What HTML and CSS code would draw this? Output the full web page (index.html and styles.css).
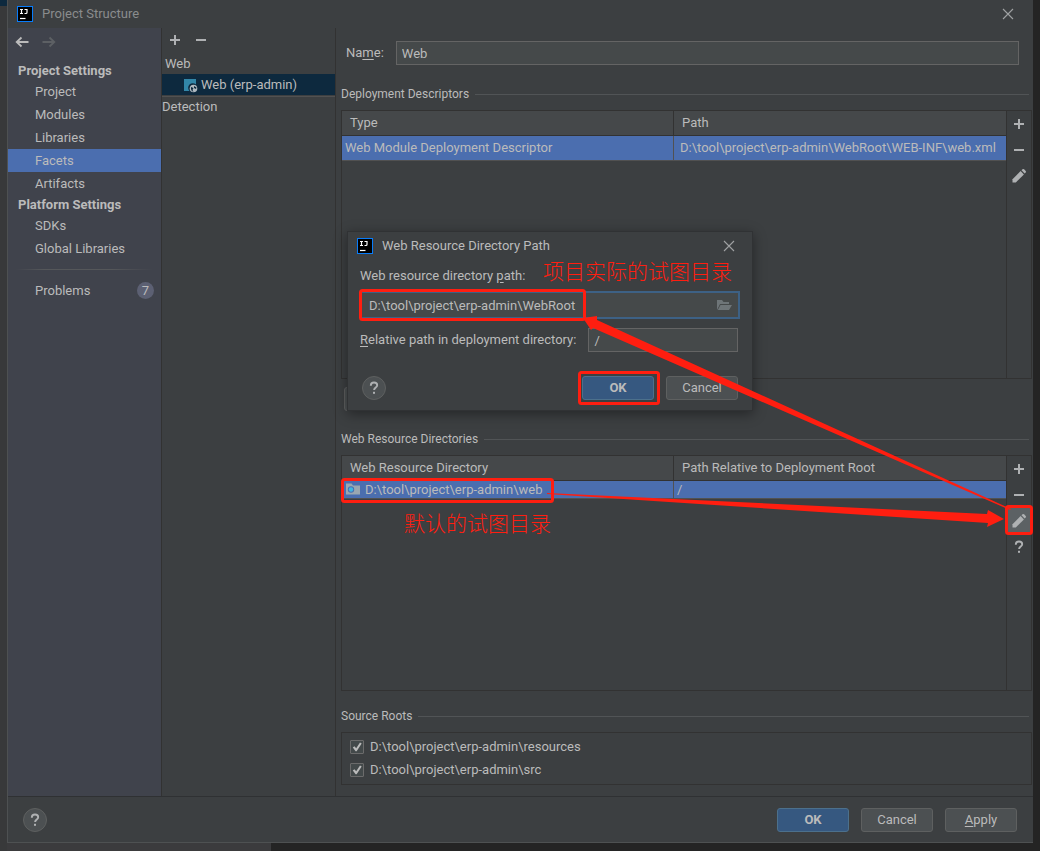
FILE: index.html
```html
<!DOCTYPE html>
<html lang="en">
<head>
    <meta charset="utf-8">
    <title>Project Structure</title>
    <link rel="stylesheet" href="styles.css">
</head>
<body>
    <svg class="sprite" aria-hidden="true">
        <symbol id="logo" viewBox="0 0 16 16">
            <rect width="16" height="16" fill="#087cfa"/>
            <rect x="1" y="1" width="14" height="14" fill="#000"/>
            <path d="M3 3.500h3M4.500 3.500v4M3 7.500h3M7.500 3.500h2.500v3q0 1-1 1H7.500" fill="none" stroke="#fff" stroke-width="1.200"/>
            <path d="M3 12.500h5.500" stroke="#fff" stroke-width="1.200"/>
        </symbol>
        <symbol id="plus" viewBox="0 0 16 16">
            <path d="M3 8h10M8 3v10" stroke="#afb1b3" stroke-width="2"/>
        </symbol>
        <symbol id="minus" viewBox="0 0 16 16">
            <path d="M3 8h10" stroke="#afb1b3" stroke-width="2"/>
        </symbol>
        <symbol id="pencil" viewBox="0 0 16 16">
            <path d="M1.500 14.500v-3.300L9.600 3.100l3.300 3.300-8.100 8.100z" fill="#afb1b3"/>
            <path d="M10.500 2.300l1-1q.8-.7 1.600 0l1.600 1.600q.7.800 0 1.600l-1 1z" fill="#afb1b3"/>
        </symbol>
        <symbol id="question" viewBox="0 0 16 16">
            <path d="M4.800 5.700q0-3.200 3.200-3.200t3.200 2.800c0 2.200-3.100 2.200-3.100 4.700" fill="none" stroke="#afb1b3" stroke-width="1.900"/>
            <rect x="7" y="11.800" width="2" height="2" fill="#afb1b3"/>
        </symbol>
        <symbol id="close" viewBox="0 0 16 16">
            <path d="M3 3l10 10M13 3L3 13" stroke="#a0a2a3" stroke-width="1.100"/>
        </symbol>
        <symbol id="arrow" viewBox="0 0 16 16">
            <path d="M14.500 8H3M7.500 3.500L2.700 8l4.800 4.500" fill="none" stroke="currentColor" stroke-width="1.800"/>
        </symbol>
    </svg>

    <div class="window">
        <header class="title-bar">
            <svg class="icon"><use href="#logo"/></svg>
            <span>Project Structure</span>
            <button class="icon-button" aria-label="Close"><svg class="icon"><use href="#close"/></svg></button>
        </header>

        <div class="content">
            <nav class="sidebar">
                <div class="history">
                    <button class="icon-button" aria-label="Back"><svg class="icon"><use href="#arrow"/></svg></button>
                    <button class="icon-button forward" aria-label="Forward" disabled><svg class="icon"><use href="#arrow"/></svg></button>
                </div>
                <h2>Project Settings</h2>
                <a href="#">Project</a>
                <a href="#">Modules</a>
                <a href="#">Libraries</a>
                <a href="#" class="active">Facets</a>
                <a href="#">Artifacts</a>
                <h2>Platform Settings</h2>
                <a href="#">SDKs</a>
                <a href="#">Global Libraries</a>
                <hr>
                <a href="#">Problems <span class="count">7</span></a>
            </nav>

            <section class="facets">
                <div class="facet-tools">
                    <button class="icon-button" aria-label="Add"><svg class="icon"><use href="#plus"/></svg></button>
                    <button class="icon-button" aria-label="Remove"><svg class="icon"><use href="#minus"/></svg></button>
                </div>
                <div class="facet-group">Web</div>
                <div class="facet-item">
                    <svg class="icon" viewBox="0 0 16 16">
                        <path d="M2 2h12v5.500a4.500 4.500 0 0 0-6.500 6.500H2z" fill="#3286a8"/>
                        <circle cx="11.500" cy="11.500" r="3.800" fill="#afb9c0"/>
                        <path d="M9 10l2.500 1-1 2 1 1.800q-3-.8-2.500-4.800zM12 9l2.500 1.500-.5 1.500-2-1z" fill="#0d293e"/>
                    </svg>
                    Web (erp-admin)
                </div>
                <div class="facet-detection">Detection</div>
            </section>

            <main class="editor">
                <div class="name-row">
                    <label for="name">Na<u>m</u>e:</label>
                    <input type="text" id="name" value="Web">
                </div>

                <h3>Deployment Descriptors</h3>
                <div class="panel descriptors">
                    <table>
                        <thead>
                            <tr><th>Type</th><th>Path</th></tr>
                        </thead>
                        <tbody>
                            <tr><td>Web Module Deployment Descriptor</td><td>D:\tool\project\erp-admin\WebRoot\WEB-INF\web.xml</td></tr>
                        </tbody>
                    </table>
                    <div class="tools">
                        <button class="icon-button" aria-label="Add"><svg class="icon"><use href="#plus"/></svg></button>
                        <button class="icon-button" aria-label="Remove"><svg class="icon"><use href="#minus"/></svg></button>
                        <button class="icon-button" aria-label="Edit"><svg class="icon"><use href="#pencil"/></svg></button>
                    </div>
                </div>
                <button class="button descriptor-button" aria-label="Add descriptor"></button>

                <h3>Web Resource Directories</h3>
                <div class="panel resources">
                    <table>
                        <thead>
                            <tr><th>Web Resource Directory</th><th>Path Relative to Deployment Root</th></tr>
                        </thead>
                        <tbody>
                            <tr>
                                <td>
                                    <div class="directory">
                                        <svg class="icon" viewBox="0 0 16 16">
                                            <path d="M1 2.500h5.500l1.500 2h7v9H1z" fill="#9aa7b0"/>
                                            <circle cx="6" cy="8.500" r="3.200" fill="#4b6eaf"/>
                                            <circle cx="6" cy="8.500" r="2.200" fill="#40b6e0"/>
                                        </svg>
                                        D:\tool\project\erp-admin\web
                                    </div>
                                </td>
                                <td>/</td>
                            </tr>
                        </tbody>
                    </table>
                    <div class="tools">
                        <button class="icon-button" aria-label="Add"><svg class="icon"><use href="#plus"/></svg></button>
                        <button class="icon-button" aria-label="Remove"><svg class="icon"><use href="#minus"/></svg></button>
                        <button class="icon-button pressed" aria-label="Edit"><svg class="icon"><use href="#pencil"/></svg></button>
                        <button class="icon-button" aria-label="Help"><svg class="icon"><use href="#question"/></svg></button>
                    </div>
                </div>

                <h3>Source Roots</h3>
                <div class="source-roots">
                    <label><input type="checkbox" checked> D:\tool\project\erp-admin\resources</label>
                    <label><input type="checkbox" checked> D:\tool\project\erp-admin\src</label>
                </div>
            </main>
        </div>

        <footer class="footer">
            <button class="help" aria-label="Help"><svg class="icon"><use href="#question"/></svg></button>
            <button class="button primary">OK</button>
            <button class="button">Cancel</button>
            <button class="button"><u>A</u>pply</button>
        </footer>
    </div>

    <div class="dialog" role="dialog" aria-labelledby="dialogTitle">
        <header class="dialog-title">
            <svg class="icon"><use href="#logo"/></svg>
            <span id="dialogTitle">Web Resource Directory Path</span>
            <button class="icon-button" aria-label="Close"><svg class="icon"><use href="#close"/></svg></button>
        </header>
        <div class="dialog-body">
            <label for="resourcePath">Web resource directory <u>p</u>ath:</label>
            <div class="path-field">
                <input type="text" id="resourcePath" value="D:\tool\project\erp-admin\WebRoot">
                <button class="icon-button" aria-label="Browse">
                    <svg class="icon" viewBox="0 0 16 16">
                        <path d="M1 13V3h5l1.500 2H13v2H4z" fill="#6e7578"/>
                        <path d="M4.500 8H16l-3 5H1.800z" fill="#6e7578"/>
                    </svg>
                </button>
            </div>
            <div class="relative-row">
                <label for="relativePath"><u>R</u>elative path in deployment directory:</label>
                <input type="text" id="relativePath" value="/">
            </div>
        </div>
        <div class="dialog-buttons">
            <button class="help" aria-label="Help"><svg class="icon"><use href="#question"/></svg></button>
            <button class="button primary">OK</button>
            <button class="button">Cancel</button>
        </div>
    </div>

    <!-- notes drawn on top -->
    <svg class="marks" width="1040" height="851" viewBox="0 0 1040 851">
        <g fill="none" stroke="#ff1e10" stroke-width="3">
            <rect x="360.500" y="290.500" width="224" height="29" rx="2"/>
            <rect x="579.500" y="372.500" width="79" height="31" rx="2"/>
            <rect x="342.500" y="479.500" width="210" height="22" rx="2"/>
            <rect x="1006.500" y="506.500" width="25" height="27" rx="2"/>
        </g>
        <g fill="#ff1e10">
            <path d="M547 493L987 514l1-4 16 9-17 8 1-4L547 494z"/>
            <path d="M1011 509L597 320v-4l-14 2 8 12 2-2 417 182z"/>
        </g>
    </svg>
    <p class="note note-actual" lang="zh">项目实际的试图目录</p>
    <p class="note note-default" lang="zh">默认的试图目录</p>
</body>
</html>
```
FILE: styles.css
```css
* {
    box-sizing: border-box;
}

body {
    margin: 0;
    padding: 0 7px 8px;
    height: 100vh;
    min-height: 851px;
    position: relative;
    background:
        linear-gradient(#0d293e, #0d293e) 0 0 / 7px 6px no-repeat,
        linear-gradient(#38393a, #38393a) 0 0 / 7px 100% no-repeat,
        linear-gradient(#3b3b3d, #3b3b3d) 0 100% / 271px 8px no-repeat,
        #242424;
    color: #bbbbbb;
    font: 13px/20px Roboto, "Noto Sans CJK SC", sans-serif;
}

button, input {
    font: inherit;
    color: inherit;
}

u {
    text-underline-offset: 2px;
}

.sprite {
    position: absolute;
    width: 0;
    height: 0;
}

.icon {
    display: block;
    flex: none;
    width: 16px;
    height: 16px;
}

.icon-button {
    display: block;
    padding: 0;
    border: none;
    background: none;
}

.window {
    display: flex;
    flex-direction: column;
    height: 100%;
    border-left: 1px solid #4e5152;
    border-bottom: 1px solid #4e5152;
    background: #3c3f41;
}

.title-bar {
    display: flex;
    align-items: center;
    flex: none;
    gap: 9px;
    height: 28px;
    padding: 0 17px 0 9px;
    color: #8a8c8d;
}

.title-bar .icon-button,
.dialog-title .icon-button {
    margin-left: auto;
}

.content {
    display: flex;
    flex: 1;
    border-bottom: 1px solid #2f3133;
}

/* left navigation */
.sidebar {
    width: 154px;
    border-right: 1px solid #323232;
    background: #40434c;
}

.history {
    display: flex;
    align-items: flex-start;
    gap: 11px;
    height: 33px;
    padding: 6px;
    color: #bbbbbb;
}

.forward {
    color: #5d6064;
    transform: scaleX(-1);
}

.sidebar h2 {
    margin: 0;
    padding-left: 10px;
    font-size: 13px;
    line-height: 19px;
}

.sidebar a {
    display: flex;
    align-items: center;
    justify-content: space-between;
    height: 23px;
    padding: 0 7px 0 27px;
    color: inherit;
    text-decoration: none;
}

.sidebar .active {
    background: #4b6eaf;
}

.sidebar hr {
    height: 1px;
    margin: 9px 8px;
    border: none;
    background: linear-gradient(90deg, transparent, #55575a 20%, #55575a 70%, transparent);
}

.count {
    width: 17px;
    height: 17px;
    border-radius: 50%;
    background: #5c6073;
    line-height: 17px;
    text-align: center;
}

/* facet list */
.facets {
    width: 174px;
    border-right: 1px solid #323232;
}

.facet-tools {
    display: flex;
    align-items: flex-start;
    gap: 10px;
    height: 25px;
    padding: 4px 5px;
}

.facet-group {
    padding-left: 3px;
    line-height: 21px;
}

.facet-item {
    display: flex;
    align-items: center;
    gap: 3px;
    height: 21px;
    padding-left: 20px;
    background: #0d293e;
}

.facet-detection {
    margin-top: 1px;
    border-top: 1px solid #515151;
}

/* facet settings */
.editor {
    display: flex;
    flex-direction: column;
    flex: 1;
    min-width: 0;
    padding: 13px 1px 11px 5px;
}

.name-row {
    display: flex;
    align-items: center;
    gap: 12px;
    margin-bottom: 4px;
    padding: 0 13px 0 5px;
}

.name-row input {
    flex: 1;
}

input[type="text"] {
    min-width: 0;
    height: 24px;
    padding: 0 5px;
    border: 1px solid #646464;
    background: #45494a;
    outline: none;
}

.editor h3 {
    display: flex;
    align-items: center;
    gap: 6px;
    margin: 15px 3px 6px 0;
    font-size: 12px;
    font-weight: normal;
}

.editor h3::after {
    content: "";
    flex: 1;
    height: 1px;
    background: #515456;
}

.panel {
    display: flex;
    align-items: flex-start;
    border: 1px solid #323232;
}

.descriptors {
    flex: 1 1 269px;
}

.resources {
    flex: 1 1 236px;
}

table {
    flex: 1;
    table-layout: fixed;
    border-spacing: 0;
    width: 100%;
}

th, td {
    height: 25px;
    padding: 0 0 0 3px;
    border-bottom: 1px solid #323232;
    font-weight: normal;
    text-align: left;
    white-space: nowrap;
}

th {
    padding-left: 8px;
    background: #45484a;
}

td {
    border-bottom-color: #515151;
    background: #4b6eaf;
}

th:first-child {
    border-right: 1px solid #323232;
}

td:first-child {
    border-right: 1px solid #515151;
}

td + td {
    padding-left: 6px;
}

.resources td {
    height: 18px;
    line-height: 17px;
}

.resources td + td {
    padding-left: 3px;
}

.directory {
    display: flex;
    gap: 4px;
}

.tools {
    display: flex;
    flex-direction: column;
    align-self: stretch;
    align-items: center;
    width: 25px;
    border-left: 1px solid #323232;
}

.tools .icon-button {
    padding: 5px 4px;
}

.tools .pressed {
    background: #5c6164;
}

.button {
    width: 72px;
    height: 24px;
    padding: 0;
    border: 1px solid #5e6060;
    border-radius: 3px;
    background: #4c5052;
}

.primary {
    border-color: #4c708c;
    background: #365880;
    font-weight: bold;
}

.editor .descriptor-button {
    margin: 8px 3px 3px;
}

.source-roots {
    display: flex;
    flex-direction: column;
    gap: 3px;
    padding: 4px 8px;
    border: 1px solid #323232;
}

.source-roots label {
    display: flex;
    align-items: center;
    gap: 6px;
}

input[type="checkbox"] {
    appearance: none;
    display: grid;
    place-items: center;
    width: 14px;
    height: 14px;
    margin: 0;
    border: 1px solid #6b6b6b;
    border-radius: 1px;
    background: #43494a;
}

input[type="checkbox"]:checked::before {
    content: "";
    width: 10px;
    height: 10px;
    background: #bbbbbb;
    clip-path: polygon(8% 55%, 24% 42%, 42% 62%, 80% 5%, 97% 15%, 46% 92%, 36% 92%);
}

.footer {
    display: flex;
    align-items: center;
    flex: none;
    gap: 12px;
    height: 46px;
    padding: 0 16px 0 15px;
}

.help {
    margin-right: auto;
    padding: 3px;
    border: 1px solid #5e6060;
    border-radius: 50%;
    background: #4c5052;
}

/* dialog */
.dialog {
    position: absolute;
    top: 231px;
    left: 347px;
    width: 406px;
    border: 1px solid #303234;
    background: #3c3f41;
    box-shadow: 0 3px 12px rgba(0, 0, 0, 0.4);
}

.dialog-title {
    display: flex;
    align-items: center;
    gap: 9px;
    height: 28px;
    padding: 0 15px 0 9px;
}

.dialog-body {
    padding: 6px 12px 0;
}

.dialog-body label {
    display: block;
}

.path-field {
    display: flex;
    align-items: center;
    margin: 5px 0 9px;
    padding: 0 6px 0 0;
    border: 2px solid #3d6185;
    background: #45494a;
}

.path-field input[type="text"] {
    flex: 1;
    border: none;
    padding: 0 7px;
    background: none;
}

.relative-row {
    display: flex;
    align-items: center;
    gap: 12px;
    padding-right: 2px;
}

.relative-row input {
    flex: 1;
}

.dialog-buttons {
    display: flex;
    align-items: center;
    gap: 12px;
    padding: 24px 14px 10px;
}

/* notes */
.marks {
    position: absolute;
    top: 0;
    left: 0;
    pointer-events: none;
}

.note {
    position: absolute;
    margin: 0;
    color: #ff1e10;
    font: 300 21px/28px "Noto Sans CJK SC", sans-serif;
}

.note-actual {
    top: 256px;
    left: 543px;
}

.note-default {
    top: 508px;
    left: 404px;
}
```
